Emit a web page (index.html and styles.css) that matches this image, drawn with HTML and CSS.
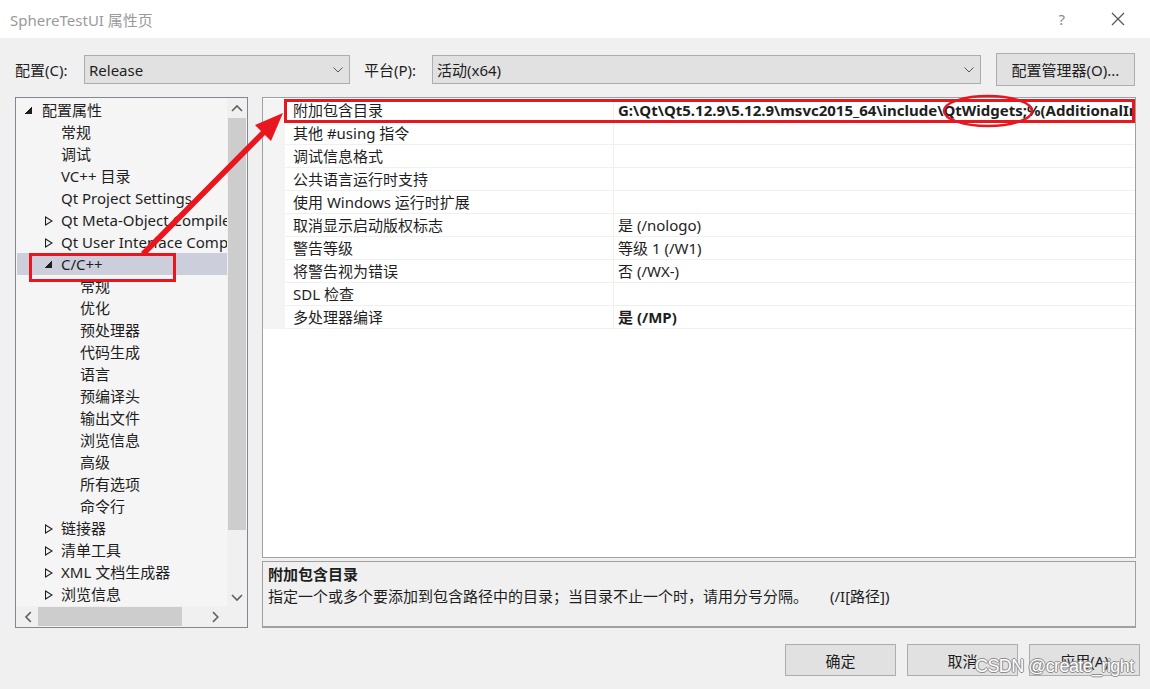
FILE: index.html
```html
<!DOCTYPE html>
<html lang="zh-CN">
<head>
  <meta charset="UTF-8">
  <title>SphereTestUI 属性页</title>
  <link rel="stylesheet" href="styles.css">
</head>
<body>
  <div class="window">
    <div class="titlebar">
      <span class="title">SphereTestUI 属性页</span>
      <span class="help">?</span>
      <svg class="close" width="14" height="14" viewBox="0 0 14 14"><path d="M1 1 L13 13 M13 1 L1 13" stroke="#555" stroke-width="1.2" fill="none"/></svg>
    </div>

    <div class="config-row">
      <span class="cfg-label">配置(C):</span>
      <div class="combo combo-config">
        <span>Release</span>
        <svg width="10" height="6" viewBox="0 0 10 6"><path d="M0.5 0.5 L5 5 L9.5 0.5" stroke="#555" fill="none"/></svg>
      </div>
      <span class="cfg-label plat">平台(P):</span>
      <div class="combo combo-platform">
        <span>活动(x64)</span>
        <svg width="10" height="6" viewBox="0 0 10 6"><path d="M0.5 0.5 L5 5 L9.5 0.5" stroke="#555" fill="none"/></svg>
      </div>
      <button class="btn btn-manager">配置管理器(O)...</button>
    </div>

    <div class="main">
      <div class="tree-panel">
        <div class="tree-body">
          <ul class="tree">
            <li class="lv0"><i class="tw open"></i>配置属性</li>
            <li class="lv1">常规</li>
            <li class="lv1">调试</li>
            <li class="lv1">VC++ 目录</li>
            <li class="lv1">Qt Project Settings</li>
            <li class="lv1"><i class="tw shut"></i>Qt Meta-Object Compiler</li>
            <li class="lv1"><i class="tw shut"></i>Qt User Interface Compiler</li>
            <li class="lv1 selected"><i class="tw open"></i>C/C++</li>
            <li class="lv2">常规</li>
            <li class="lv2">优化</li>
            <li class="lv2">预处理器</li>
            <li class="lv2">代码生成</li>
            <li class="lv2">语言</li>
            <li class="lv2">预编译头</li>
            <li class="lv2">输出文件</li>
            <li class="lv2">浏览信息</li>
            <li class="lv2">高级</li>
            <li class="lv2">所有选项</li>
            <li class="lv2">命令行</li>
            <li class="lv1"><i class="tw shut"></i>链接器</li>
            <li class="lv1"><i class="tw shut"></i>清单工具</li>
            <li class="lv1"><i class="tw shut"></i>XML 文档生成器</li>
            <li class="lv1"><i class="tw shut"></i>浏览信息</li>
          </ul>
          <div class="vscroll">
            <svg class="arr" width="12" height="8" viewBox="0 0 12 8"><path d="M1 7 L6 2 L11 7" stroke="#606060" stroke-width="1.6" fill="none"/></svg>
            <div class="vthumb"></div>
            <svg class="arr" width="12" height="8" viewBox="0 0 12 8"><path d="M1 1 L6 6 L11 1" stroke="#606060" stroke-width="1.6" fill="none"/></svg>
          </div>
        </div>
        <div class="hscroll">
          <svg class="harr" width="8" height="12" viewBox="0 0 8 12"><path d="M7 1 L2 6 L7 11" stroke="#606060" stroke-width="1.6" fill="none"/></svg>
          <div class="htrack"><div class="hthumb"></div></div>
          <svg class="harr" width="8" height="12" viewBox="0 0 8 12"><path d="M1 1 L6 6 L1 11" stroke="#606060" stroke-width="1.6" fill="none"/></svg>
          <div class="corner"></div>
        </div>
      </div>

      <div class="right">
        <div class="grid">
          <div class="prop"><span class="gut"></span><span class="name">附加包含目录</span><span class="val bold">G:\Qt\Qt5.12.9\5.12.9\msvc2015_64\include\QtWidgets;%(AdditionalIncludeDirectories)</span></div>
          <div class="prop"><span class="gut"></span><span class="name">其他 #using 指令</span><span class="val"></span></div>
          <div class="prop"><span class="gut"></span><span class="name">调试信息格式</span><span class="val"></span></div>
          <div class="prop"><span class="gut"></span><span class="name">公共语言运行时支持</span><span class="val"></span></div>
          <div class="prop"><span class="gut"></span><span class="name">使用 Windows 运行时扩展</span><span class="val"></span></div>
          <div class="prop"><span class="gut"></span><span class="name">取消显示启动版权标志</span><span class="val">是 (/nologo)</span></div>
          <div class="prop"><span class="gut"></span><span class="name">警告等级</span><span class="val">等级 1 (/W1)</span></div>
          <div class="prop"><span class="gut"></span><span class="name">将警告视为错误</span><span class="val">否 (/WX-)</span></div>
          <div class="prop"><span class="gut"></span><span class="name">SDL 检查</span><span class="val"></span></div>
          <div class="prop"><span class="gut"></span><span class="name">多处理器编译</span><span class="val bold">是 (/MP)</span></div>
        </div>
        <div class="desc">
          <div class="desc-title">附加包含目录</div>
          <div class="desc-text">指定一个或多个要添加到包含路径中的目录；当目录不止一个时，请用分号分隔。<span class="switch">(/I[路径])</span></div>
        </div>
      </div>
    </div>

    <div class="footer">
      <button class="btn">确定</button>
      <button class="btn">取消</button>
      <button class="btn">应用(A)</button>
    </div>

    <!-- red marks drawn over the screenshot -->
    <svg class="annot" width="1150" height="689" viewBox="0 0 1150 689">
      <g fill="none" stroke="#e8171f" stroke-width="3">
        <rect x="285.5" y="100.5" width="848" height="21"/>
        <rect x="30.5" y="254.5" width="144" height="26"/>
        <ellipse cx="988" cy="111" rx="44" ry="15" stroke-width="2.5"/>
      </g>
      <path d="M141 252 L261 131 L255 125 L283 113 L271 141 L265 135 L145 256 Z" fill="#e8171f"/>
    </svg>
    <div class="watermark">CSDN @create_right</div>
  </div>
</body>
</html>
```

FILE: styles.css
```css
body {
  margin: 0;
  padding: 0;
  font-family: "Noto Sans", "Noto Sans CJK SC", sans-serif;
  font-size: 15px;
  color: #1e1e1e;
}

.window {
  position: relative;
  width: 1150px;
  height: 689px;
  background-color: #f0f0f0;
  overflow: hidden;
}

.titlebar {
  height: 38px;
  background-color: white;
  display: flex;
  align-items: center;
  padding-left: 10px;
}

.title {
  flex: 1;
  color: #9a9a9a;
  font-size: 15px;
}

.help {
  color: #8a8a8a;
  font-size: 15px;
  margin-right: 46px;
}

.close {
  margin-right: 25px;
}

/* config bar */
.config-row {
  display: flex;
  align-items: center;
  height: 33px;
  margin-top: 15px;
  padding-left: 15px;
}

.cfg-label {
  width: 69px;
}

.cfg-label.plat {
  margin-left: 14px;
  width: 68px;
}

.combo {
  box-sizing: border-box;
  height: 29px;
  background-color: #e1e1e1;
  border: 1px solid #adadad;
  display: flex;
  align-items: center;
  justify-content: space-between;
  padding: 0 6px 0 4px;
}

.combo-config {
  width: 266px;
}

.combo-platform {
  width: 549px;
}

.btn {
  box-sizing: border-box;
  background-color: #e1e1e1;
  border: 1px solid #adadad;
  font-family: inherit;
  font-size: 15px;
  color: #1e1e1e;
  padding: 0;
}

.btn-manager {
  width: 139px;
  height: 33px;
  margin-left: 15px;
}

/* main area */
.main {
  display: flex;
  margin-top: 11px;
  padding-left: 15px;
  height: 531px;
}

.tree-panel {
  box-sizing: border-box;
  width: 233px;
  height: 531px;
  border: 1px solid #828790;
  background-color: #f5f5f5;
  display: flex;
  flex-direction: column;
}

.tree-body {
  flex: 1;
  display: flex;
  min-height: 0;
}

.tree {
  list-style: none;
  margin: 0;
  padding: 1px 0 0 1px;
  flex: 1;
  overflow: hidden;
}

.tree li {
  height: 22px;
  line-height: 22px;
  white-space: nowrap;
  position: relative;
}

.tree .lv0 { padding-left: 25px; }
.tree .lv1 { padding-left: 44px; }
.tree .lv2 { padding-left: 63px; }

.tree .selected {
  background-color: #cccedb;
}

.tw {
  position: absolute;
  top: 7px;
  width: 9px;
  height: 9px;
}

.lv0 .tw { left: 8px; }
.lv1 .tw { left: 28px; }

.tw.open {
  top: 8px;
  width: 7px;
  height: 7px;
  background: linear-gradient(135deg, transparent 50%, #1e1e1e 50%);
}

.tw.shut {
  width: 0;
  height: 0;
  border-top: 5px solid transparent;
  border-bottom: 5px solid transparent;
  border-left: 8px solid #1e1e1e;
}

.tw.shut::after {
  content: "";
  position: absolute;
  left: -7px;
  top: -3px;
  border-top: 3px solid transparent;
  border-bottom: 3px solid transparent;
  border-left: 5px solid #f5f5f5;
}

.vscroll {
  width: 20px;
  background-color: #f0f0f0;
  display: flex;
  flex-direction: column;
  align-items: center;
}

.vscroll .arr {
  margin: 6px 0;
}

.vthumb {
  width: 18px;
  height: 412px;
  background-color: #cdcdcd;
}

.vscroll .arr:last-child {
  margin-top: auto;
  margin-bottom: 4px;
}

.hscroll {
  height: 21px;
  display: flex;
  align-items: center;
  background-color: #f0f0f0;
}

.harr {
  margin: 0 8px;
}

.htrack {
  width: 168px;
  height: 19px;
}

.hthumb {
  width: 144px;
  height: 19px;
  margin-left: -2px;
  background-color: #cdcdcd;
}

.corner {
  width: 20px;
  height: 21px;
  margin-left: auto;
  background-color: #f0f0f0;
}

/* property grid */
.right {
  margin-left: 14px;
  width: 874px;
  display: flex;
  flex-direction: column;
}

.grid {
  box-sizing: border-box;
  height: 461px;
  border: 1px solid #a0a0a0;
  background-color: white;
  padding-top: 1px;
}

.prop {
  display: grid;
  grid-template-columns: 22px 329px 1fr;
  height: 23px;
  line-height: 22px;
}

.prop .gut {
  background-color: #f4f4f4;
}

.prop .name {
  padding-left: 8px;
  border-bottom: 1px solid #f0f0f0;
  border-right: 1px solid #f0f0f0;
  white-space: nowrap;
}

.prop .val {
  padding-left: 4px;
  border-bottom: 1px solid #f0f0f0;
  white-space: nowrap;
  overflow: hidden;
}

.bold {
  font-weight: bold;
}

.desc {
  box-sizing: border-box;
  margin-top: 3px;
  height: 67px;
  border: 1px solid #a0a0a0;
  border-bottom: 2px solid #a0a0a0;
  padding: 1px 5px;
}

.desc-title {
  font-weight: bold;
  height: 22px;
  line-height: 22px;
}

.desc-text {
  height: 22px;
  line-height: 22px;
}

.switch {
  margin-left: 22px;
}

/* dialog buttons */
.footer {
  display: flex;
  justify-content: flex-end;
  gap: 11px;
  padding-right: 10px;
  margin-top: 16px;
}

.footer .btn {
  width: 111px;
  height: 32px;
}

.annot {
  position: absolute;
  left: 0;
  top: 0;
  pointer-events: none;
}

.watermark {
  position: absolute;
  left: 975px;
  top: 656px;
  font-family: "Liberation Sans", sans-serif;
  font-size: 18px;
  color: #ffffff;
  text-shadow: 1px 0 0 #8c8c8c, -1px 0 0 #8c8c8c, 0 1px 0 #8c8c8c, 0 -1px 0 #8c8c8c;
  letter-spacing: -0.6px;
}
```
